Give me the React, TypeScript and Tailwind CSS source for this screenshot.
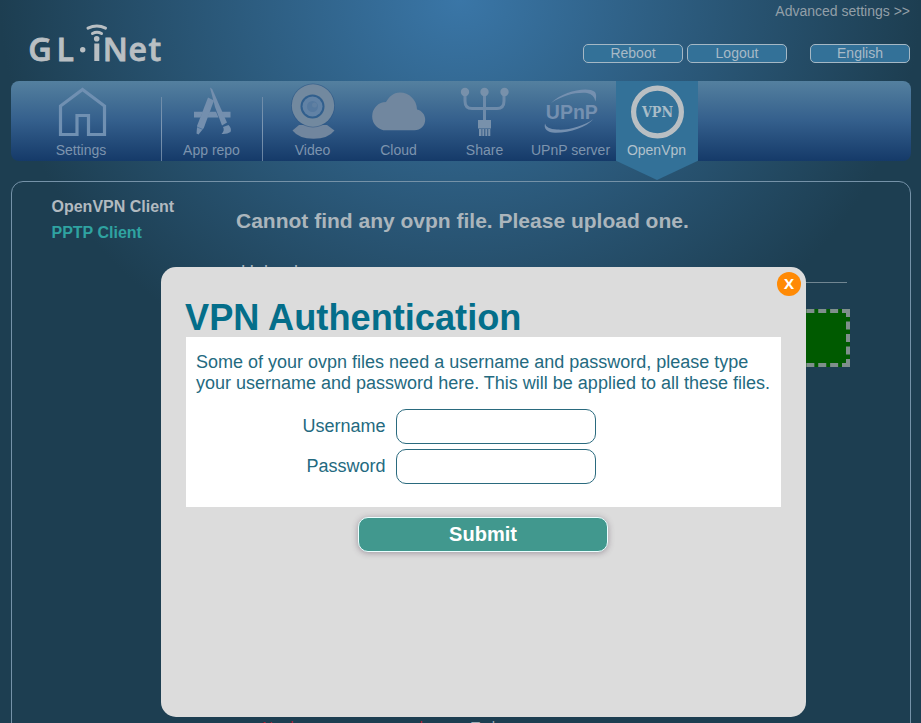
import type { ReactNode } from "react";

function Logo() {
  return (
    <svg width="140" height="44" viewBox="26 22 140 44" className="block overflow-visible" fill="#b9bfc3">
      <g stroke="#b9bfc3" strokeWidth="0.8">
        <text x="28.2" y="61" fontSize="32" fontWeight="600" textLength="23.5" lengthAdjust="spacingAndGlyphs" fontFamily="'Open Sans','Noto Sans',sans-serif">G</text>
        <text x="56.5" y="61" fontSize="32" fontWeight="600" fontFamily="'Open Sans','Noto Sans',sans-serif">L</text>
        <text x="102.800 128.500 148.500" y="61" fontSize="32" fontWeight="600" fontFamily="'Open Sans','Noto Sans',sans-serif">Net</text>
      </g>
      <circle cx="82.7" cy="49.7" r="2.7" />
      <circle cx="96.7" cy="38.8" r="2.8" />
      <rect x="94.3" y="43.5" width="5" height="17.5" />
      <path d="M88 28.2Q97 24 105.500 28.2M92.500 33.5Q97 31 101.500 33.5" fill="none" stroke="#b9bfc3" strokeWidth="3" strokeLinecap="round" />
    </svg>
  );
}

function Icon({ children, x }: { children: ReactNode; x: number }) {
  return (
    <svg width="72" height="60" viewBox={`${x - 36} 81 72 60`} className="block shrink-0 overflow-visible">
      {children}
    </svg>
  );
}

const house = (
  <Icon x={82}>
    <path d="M60.500 134.500V106L82.500 89.500L104.500 106V134.500H88.500V115.500H77V134.500Z" fill="none" stroke="#7090b2" strokeWidth="3.200" />
  </Icon>
);

const repo = (
  <Icon x={212}>
    <g fill="#748fae">
      <path d="M194 111.800H203L200.500 117.500H194ZM209.500 111.800H216L218.500 117.500H207ZM221.500 111.800H230.500V117.500H224Z" />
      <path d="M208 97.500L214 100.500L203.800 128L198.500 134.500L196.500 133.500L197.200 125.500Z" />
      <path d="M210 87.500L212.200 89L227 122.500L222 125.500L215 107Z" />
      <path d="M223 127L228.500 125Q232 128.500 230.500 132Q227 134.500 221.500 134Q225 130.500 223 127Z" />
    </g>
    <path d="M197 127L203 129.500" stroke="#456f9b" strokeWidth="0.8" />
  </Icon>
);

const camera = (
  <Icon x={313}>
    <path d="M299 125H327L334.500 130.500Q328 138.800 313.500 138.800Q299 138.800 292.500 130.500Z" fill="#71869e" />
    <circle cx="313" cy="105.500" r="22" fill="#2f5886" opacity="0.65" />
    <circle cx="313" cy="105.500" r="21.200" fill="#72899f" />
    <circle cx="312.500" cy="106.500" r="12" fill="#315f8d" />
    <circle cx="312.500" cy="106.500" r="10" fill="#6182a5" />
    <circle cx="312.500" cy="106.500" r="5.500" fill="#55799f" />
    <circle cx="314.500" cy="105" r="2.500" fill="#6080a2" />
  </Icon>
);

const cloud = (
  <Icon x={399}>
    <path d="M386 130.300A13.700 14 0 0 1 386 102C389 97 393 92.500 400 92.500C409 92.500 417 100 417 109.500C422 110.500 425.200 115 425.200 119.500C425.200 126 420.500 130.300 414.500 130.300Z" fill="#71879f" />
  </Icon>
);

const share = (
  <Icon x={485}>
    <g fill="none" stroke="#6e8baa" strokeWidth="3">
      <path d="M465 92V101Q465 108.500 472 108.500H497Q504 108.500 504 101V92M484.500 92V121" />
    </g>
    <g fill="#7891ab">
      <circle cx="465" cy="92" r="4.200" />
      <circle cx="484.500" cy="92" r="4.200" />
      <circle cx="504.500" cy="92" r="4.200" />
      <path d="M478 120H491V128.500H478ZM479 129H481.500V136H479ZM482.300 129H484.300V136H482.300ZM485.300 129H487.300V136H485.300ZM488.200 129H490.300V136H488.200Z" />
    </g>
  </Icon>
);

const upnp = (
  <Icon x={571}>
    <text x="545.800" y="119" fontSize="20" fontWeight="700" textLength="52" lengthAdjust="spacingAndGlyphs" fontFamily="'Liberation Sans',Arial,sans-serif" fill="#7590b0">UPnP</text>
    <path d="M551 103C563 91 588 86 595 92Q597 95 595.500 101.500Q594 94 587 93C577 92 563 95 551 103ZM545 123.500Q543 132 555 132.800C570 133 587 127 593.500 119C583 126.500 568 130.500 557 129.500Q546 129 545 123.500Z" fill="#7590b0" />
  </Icon>
);

const vpn = (
  <Icon x={657}>
    <circle cx="657.500" cy="112" r="23.900" fill="none" stroke="#b9bfc3" strokeWidth="5.200" />
    <text x="642" y="117" fontSize="14" fontWeight="700" textLength="31" lengthAdjust="spacingAndGlyphs" fontFamily="'DejaVu Serif','Liberation Serif',serif" fill="#a9bdc8">VPN</text>
  </Icon>
);

function NavItem({ icon, label, className = "w-[82px] text-[#7d94ae]" }: { icon: ReactNode; label: string; className?: string }) {
  return (
    <div className={`flex h-20 shrink-0 flex-col items-center whitespace-nowrap text-sm leading-[18px] ${className}`}>
      {icon}
      <span className="mr-px">{label}</span>
    </div>
  );
}

function HeaderButton({ label }: { label: string }) {
  return (
    <button className="block h-[19px] w-[100px] rounded-[5px] border border-[#a5b8c5] bg-[#337198] text-sm leading-[17px] text-[#a8bac7]">
      {label}
    </button>
  );
}

function Field({ label }: { label: string }) {
  return (
    <label className="flex h-[35px] items-center gap-[10.500px]">
      <span className="w-[199.500px] text-right">{label}</span>
      <input className="h-[35px] w-[200px] rounded-[10px] border border-[#2a6a7e] bg-white px-2 outline-none" />
    </label>
  );
}

export default function App() {
  return (
    <div className="relative h-[723px] w-[921px] overflow-hidden bg-[#1d3e51] bg-[radial-gradient(460px_400px_at_460px_0px,#3a76a7_0%,#1d3e51_100%)] font-['Liberation_Sans',Arial,sans-serif]">
      <header className="flex h-[81px] justify-between pl-[26px] pr-[11px]">
        <div className="pt-[22px]"><Logo /></div>
        <div className="flex flex-col items-end">
          <a className="mt-[2px] text-sm leading-[18px] text-[#929fa8]">Advanced settings &gt;&gt;</a>
          <div className="mt-6 flex items-start">
            <HeaderButton label="Reboot" />
            <div className="ml-1"><HeaderButton label="Logout" /></div>
            <div className="ml-[23px]"><HeaderButton label="English" /></div>
          </div>
        </div>
      </header>

      <nav className="ml-[11px] flex h-20 w-[900px] rounded-lg bg-linear-to-b from-[#54809f] via-[#345f8c] to-[#153a69]">
        <NavItem icon={house} label="Settings" className="w-[150px] pr-[9px] text-[#7d94ae]" />
        <div className="mt-4 h-16 w-px bg-linear-to-b from-[#6d8ba8] via-[#7d97b3] to-[#65809f]" />
        <NavItem icon={repo} label="App repo" className="w-[100px] text-[#7d94ae]" />
        <div className="mr-[9px] mt-4 h-16 w-px bg-linear-to-b from-[#6d8ba8] via-[#7d97b3] to-[#65809f]" />
        <div className="flex gap-1">
          <NavItem icon={camera} label="Video" />
          <NavItem icon={cloud} label="Cloud" />
          <NavItem icon={share} label="Share" />
          <NavItem icon={upnp} label="UPnP server" />
          <div className="h-[99px] w-[82px] bg-[#337198] [clip-path:polygon(0_0,100%_0,100%_80.500%,50%_100%,0_80.500%)]">
            <NavItem icon={vpn} label="OpenVpn" className="w-[82px] text-[#b1c1cc]" />
          </div>
        </div>
      </nav>

      <main className="ml-[11px] mt-5 flex h-[600px] w-[900px] rounded-xl border border-[#7592a8]">
        <aside className="w-[224px] pl-[39.500px] pt-[12px] font-bold leading-[26px] text-[#b2bac0]">
          <p>OpenVPN Client</p>
          <p className="text-[#2fa3a1]">PPTP Client</p>
        </aside>
        <section className="w-[614px] pt-[26px]">
          <h2 className="text-[21px] font-bold leading-[26px] text-[#abb5bc]">Cannot find any ovpn file. Please upload one.</h2>
          <h3 className="mt-[27px] h-[22px] w-[611px] border-b border-[#718692] pl-[5px] text-[18px] leading-[22px] text-[#a8b6c0]">Upload</h3>
          <div className="mt-[26px] h-[58px] border-4 border-dashed border-[#7f8f8c] bg-[#005a00]" />
          <p className="ml-[26px] mt-[350px] flex text-[15px] leading-5 text-[#9eacb5]">
            <span className="w-[209px] text-[#b51e30]">No dns server on record</span>
            <span>Today</span>
          </p>
        </section>
      </main>

      <div className="absolute left-[161px] top-[267px] h-[450px] w-[645px] rounded-[15px] bg-[#dcdcdc]" role="dialog">
        <button className="absolute right-[5px] top-[5px] size-6 rounded-full bg-[#ff8a05] font-['Open_Sans',sans-serif] text-[15px] font-bold leading-[23px] text-white">
          <span className="block -translate-y-px">X</span>
        </button>
        <div className="flex flex-col px-[25px] pt-[29px] text-[#246a7f]">
          <h1 className="-ml-px h-[41px] text-[36.200px] font-bold leading-[43px] text-[#046e8a]">VPN Authentication</h1>
          <div className="h-[170px] w-[595px] bg-white pt-[15px] text-[18px] leading-[21px]">
            <p className="whitespace-nowrap pl-[10px]">Some of your ovpn files need a username and password, please type<br />your username and password here. This will be applied to all these files.</p>
            <div className="mt-[15px] flex flex-col gap-[5px]">
              <Field label="Username" />
              <Field label="Password" />
            </div>
          </div>
          <button className="ml-[172px] mt-[10px] h-[35px] w-[250px] rounded-[10px] border border-[#eaffff] bg-[#41988e] pb-px text-[20px] font-bold leading-[31px] text-white shadow-[0_1px_6px_rgba(80,60,80,0.450)]">Submit</button>
        </div>
      </div>
    </div>
  );
}
